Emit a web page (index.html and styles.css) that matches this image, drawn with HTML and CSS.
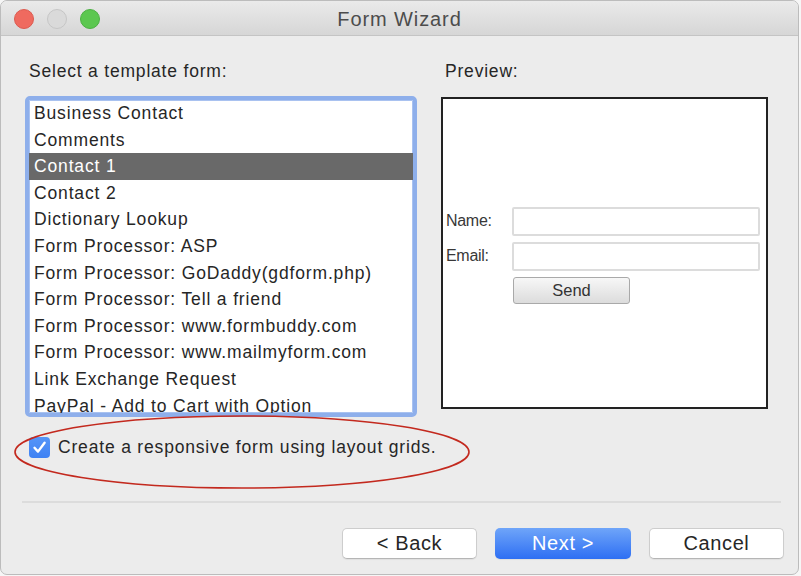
FILE: index.html
```html
<!DOCTYPE html>
<html>
<head>
<meta charset="utf-8">
<link rel="stylesheet" href="styles.css">
</head>
<body>
<div class="window">
  <div class="titlebar">
    <div class="lights">
      <span class="light red"></span>
      <span class="light gray"></span>
      <span class="light green"></span>
    </div>
    <div class="title">Form Wizard</div>
    <div></div>
  </div>
  <div class="content">
    <div class="columns">
      <div class="col-left">
        <div class="label">Select a template form:</div>
        <div class="listbox">
          <div class="item">Business Contact</div>
          <div class="item">Comments</div>
          <div class="item selected">Contact 1</div>
          <div class="item">Contact 2</div>
          <div class="item">Dictionary Lookup</div>
          <div class="item">Form Processor: ASP</div>
          <div class="item">Form Processor: GoDaddy(gdform.php)</div>
          <div class="item">Form Processor: Tell a friend</div>
          <div class="item">Form Processor: www.formbuddy.com</div>
          <div class="item">Form Processor: www.mailmyform.com</div>
          <div class="item">Link Exchange Request</div>
          <div class="item">PayPal - Add to Cart with Option</div>
        </div>
      </div>
      <div class="col-right">
        <div class="label">Preview:</div>
        <div class="preview">
          <div class="pform">
            <div class="plabel">Name:</div>
            <div class="pinput"></div>
            <div class="plabel">Email:</div>
            <div class="pinput"></div>
            <div></div>
            <div class="pbutton">Send</div>
          </div>
        </div>
      </div>
    </div>
    <div class="checkrow">
      <span class="checkbox">
        <svg width="21" height="21" viewBox="0 0 21 21"><path d="M5.5 10.8 L9 14.6 L15.6 5.8" fill="none" stroke="#fff" stroke-width="2.4" stroke-linecap="round" stroke-linejoin="round"/></svg>
      </span>
      <span class="checklabel">Create a responsive form using layout grids.</span>
    </div>
    <div class="separator"></div>
    <div class="buttons">
      <div class="btn">&lt; Back</div>
      <div class="btn primary">Next &gt;</div>
      <div class="btn">Cancel</div>
    </div>
  </div>
  <svg class="annotation" width="801" height="576" viewBox="0 0 801 576">
    <ellipse cx="242" cy="452" rx="227" ry="36" fill="none" stroke="#c3291e" stroke-width="1.6"/>
  </svg>
</div>
</body>
</html>
```
FILE: styles.css
```css
* { box-sizing: border-box; }
html, body {
  margin: 0;
  padding: 0;
  background: #f6f6f6;
  font-family: "Liberation Sans", Arial, sans-serif;
  color: #262626;
}
.window {
  width: 799px;
  height: 575px;
  border: 1px solid #bcbcbc;
  border-radius: 7px;
  background: #ececec;
  overflow: hidden;
  position: relative;
}
.titlebar {
  height: 35px;
  border-bottom: 1px solid #c4c4c4;
  background: linear-gradient(#eaeaea, #d6d6d6);
  display: grid;
  grid-template-columns: 1fr auto 1fr;
  align-items: center;
}
.lights {
  display: flex;
  gap: 13px;
  padding-left: 13px;
  padding-top: 1px;
}
.light {
  width: 20px;
  height: 20px;
  border-radius: 50%;
  display: block;
}
.red { background: #ef6a5f; border: 1px solid #dc5a4f; }
.gray { background: #dadada; border: 1px solid #c6c6c6; }
.green { background: #5cc750; border: 1px solid #4cb143; }
.title {
  font-size: 20px;
  letter-spacing: 0.9px;
  color: #4c4c4c;
  padding-top: 2px;
}
.content {
  padding: 25px 14px 0 24px;
}
.columns {
  display: grid;
  grid-template-columns: 392px 327px;
  column-gap: 24px;
}
.label {
  font-size: 17.5px;
  letter-spacing: 0.8px;
  line-height: 20px;
  padding-left: 4px;
  height: 20px;
}
.listbox {
  margin-top: 15px;
  height: 321px;
  border: 4px solid #8eafeb;
  border-radius: 5px;
  background: #fff;
  overflow: hidden;
  box-shadow: inset 0 0 0 1px #a9c2f0;
}
.item {
  height: 26.6px;
  line-height: 26px;
  padding-left: 5px;
  font-size: 17.5px;
  letter-spacing: 0.85px;
  color: #262626;
  white-space: nowrap;
}
.item.selected {
  background: #696969;
  color: #fff;
}
.col-right .label { padding-left: 4px; }
.preview {
  margin-top: 16px;
  height: 312px;
  border: 2px solid #222;
  background: #fff;
  padding: 108px 7px 0 3px;
}
.pform {
  display: grid;
  grid-template-columns: 66px 248px;
  row-gap: 6px;
  align-items: center;
  font-family: "Liberation Sans", Arial, sans-serif;
  font-size: 16px;
  color: #383838;
}
.plabel {
  letter-spacing: -0.3px;
  height: 29px;
  line-height: 27px;
}
.pinput {
  height: 29px;
  border: 2px solid #dcdcdc;
  border-radius: 2px;
  background: #fff;
}
.pbutton {
  width: 117px;
  height: 27px;
  border: 1px solid #a9a9a9;
  border-radius: 3px;
  background: linear-gradient(#f7f7f7, #dcdcdc);
  text-align: center;
  line-height: 25px;
  font-size: 16.5px;
  color: #333;
  margin-left: 1px;
}
.checkrow {
  margin-top: 19px;
  display: flex;
  align-items: center;
  gap: 8px;
  padding-left: 4px;
  height: 22px;
}
.checkbox {
  width: 21px;
  height: 21px;
  border-radius: 4px;
  background: linear-gradient(#5595f8, #3f82f3);
  display: block;
}
.checkbox svg { display: block; }
.checklabel {
  font-size: 17.5px;
  letter-spacing: 0.82px;
}
.separator {
  margin: 43px 3px 0 -3px;
  height: 2px;
  background: #dcdcdc;
}
.buttons {
  margin-top: 25px;
  display: flex;
  justify-content: flex-end;
  gap: 18px;
}
.btn {
  width: 135px;
  height: 31px;
  border: 1px solid #cdcdcd;
  border-bottom-color: #b5b5b5;
  border-radius: 5px;
  background: #fff;
  text-align: center;
  line-height: 29px;
  font-size: 20px;
  letter-spacing: 0.6px;
  color: #262626;
  box-shadow: 0 1px 1px rgba(0,0,0,0.06);
}
.btn.primary {
  width: 136px;
  border: none;
  background: linear-gradient(#6fa5f9, #2e6ff3);
  color: #fff;
  line-height: 31px;
}
.annotation {
  position: absolute;
  left: -1px;
  top: -1px;
  pointer-events: none;
}
```
